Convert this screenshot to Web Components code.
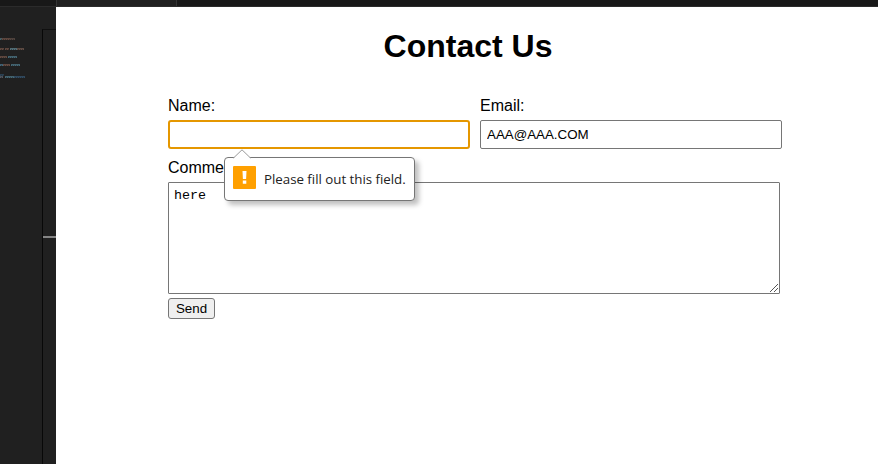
<!DOCTYPE html>
<html lang="en">
<head>
<meta charset="utf-8">
<title>Contact Us</title>
<style>
html, body { margin: 0; height: 100%; overflow: hidden; background: #202020; }
body { font-family: "Liberation Sans", Arial, sans-serif; color: #000; }
</style>
</head>
<body>
<editor-shell>
  <code-minimap slot="side"></code-minimap>
  <contact-form>
    <text-field label="Name:" focused>
      <validation-bubble>Please fill out this field.</validation-bubble>
    </text-field>
    <text-field label="Email:" value="AAA@AAA.COM"></text-field>
    <comment-box slot="comment" label="Comment:">here</comment-box>
    <send-button slot="action">Send</send-button>
  </contact-form>
</editor-shell>
<script>
function define(name, render) {
  customElements.define(name, class extends HTMLElement {
    connectedCallback() {
      if (this.shadowRoot) return;
      this.attachShadow({ mode: 'open' }).innerHTML = '<style>:host,*{box-sizing:border-box}</style>' + render(this);
    }
  });
}

define('editor-shell', () => `
<style>
:host { display: grid; height: 464px; grid-template: 7px 1fr / 56px 1fr; background: #202020; }
.tabs { grid-column: 1 / 3; display: grid; grid-template-columns: 57px 120px 1fr; background: #181818; border-bottom: 1px solid #2b2b2b; }
.tabs i { border-right: 1px solid #343434; }
.tabs i:nth-child(2) { background: #202020; }
.tabs i:last-child { border: 0; }
main { background: #fff; min-width: 0; }
</style>
<div class="tabs"><i></i><i></i><i></i></div>
<slot name="side"></slot>
<main><slot></slot></main>`);

define('code-minimap', () => {
  const lines = [
    [37, [[0, 2, '#58757d'], [2, 8, '#76564a'], [10, 5, '#625048']]],
    [47, [[0, 4, '#76564a'], [5, 4, '#76564a'], [10, 7, '#648a96'], [17, 7, '#765b50']]],
    [55, [[0, 7, '#76564a'], [8, 9, '#507d8f']]],
    [63, [[0, 3, '#4b7a94'], [3, 7, '#7a594c'], [11, 9, '#507d8f']]],
    [73, [[0, 4, '#2f4e66']]],
    [75, [[0, 3, '#5f6570'], [5, 9, '#507d8f'], [14, 11, '#365976']]]
  ];
  const marks = lines.map(([y, runs]) => runs.map(([x, w, c]) =>
    `<path d="M${x} ${y - 6.5}h${w}" stroke="${c}" opacity=".7"/><path d="M${x} ${y - 5.5}h${w}" stroke="${c}" stroke-dasharray="1.5 .5" opacity=".8"/>`).join('')).join('');
  return `
<style>
:host { display: grid; grid-template-columns: 42px 14px; }
svg { display: block; margin-top: 1px; }
.ruler { margin-top: 22px; border-left: 1px solid #080808; border-top: 1px solid #101010; padding-top: 206px; }
.cursor { display: block; height: 2px; background: #858585; }
</style>
<svg width="42" height="90" fill="none">${marks}</svg>
<div class="ruler"><i class="cursor"></i></div>`;
});

define('contact-form', () => `
<style>
:host { display: block; padding: 21px 96px 0 112px; }
h1 { font-size: 32px; line-height: 37px; margin: 0 0 32px; width: 600px; text-align: center; }
.row { display: grid; grid-template-columns: 302px 302px; gap: 10px; }
</style>
<h1>Contact Us</h1>
<div class="row"><slot></slot></div>
<slot name="comment"></slot>
<slot name="action"></slot>`);

define('text-field', el => `
<style>
:host { display: block; position: relative; font-size: 16px; }
label { display: block; line-height: 18px; margin-bottom: 5px; }
input { display: block; width: 302px; height: 29px; margin: 0; padding: 1px 6px; border: 1px solid #767676; border-radius: 2px; outline: 0; background: #fff; color: #000; font: 13.333px "Liberation Sans", Arial, sans-serif; }
:host([focused]) input { border: 2px solid #e59700; border-radius: 3px; }
</style>
<label>${el.getAttribute('label')}</label>
<input value="${el.getAttribute('value') || ''}">
<slot></slot>`);

define('validation-bubble', () => `
<style>
:host { position: absolute; left: 56px; top: 60px; z-index: 2; display: flex; align-items: center; width: 191px; height: 44px; padding: 0 8px; border: 1px solid #767676; border-radius: 4px; background: #fff; box-shadow: 4px 4px 5px rgba(0,0,0,.25); font: 13.333px/20px "Open Sans", "Noto Sans", sans-serif; color: #222; white-space: nowrap; }
.tip { position: absolute; left: 7px; top: -9px; }
.icon { flex: none; margin: -4px 8px 0 0; }
span { letter-spacing: -.03px; }
</style>
<svg class="tip" width="20" height="10"><path d="M1 10V9.5L10 1 19 9.5V10Z" fill="#fff"/><path d="M1.5 9 10 .8 18.5 9" fill="none" stroke="#999"/></svg>
<svg class="icon" width="23" height="23"><rect width="23" height="23" rx="1" fill="#ffa000"/><path d="M9.5 5h4l-.4 8h-3.2zM9.8 14.5h3.5v3.2H9.8z" fill="#fff"/></svg>
<span><slot></slot></span>`);

define('comment-box', el => `
<style>
:host { display: block; margin-top: 10px; font-size: 16px; }
label { display: block; line-height: 18px; margin-bottom: 5px; }
textarea { display: block; width: 612px; height: 112px; margin: 0; padding: 5px; border: 1px solid #767676; border-radius: 1px; resize: none; outline: 0; background: #fff; color: #000; font: 13.333px/15px "Liberation Mono", "Courier New", monospace; }
.frame { position: relative; width: 612px; }
.grip { position: absolute; right: 1px; bottom: 1px; }
</style>
<label>${el.getAttribute('label')}</label>
<div class="frame"><textarea>${el.textContent}</textarea>
<svg class="grip" width="10" height="10" fill="#555" shape-rendering="crispEdges"><path d="M1 8h1v1H1zM2 7h1v1H2zM3 6h1v1H3zM4 5h1v1H4zM5 4h1v1H5zM6 3h1v1H6zM7 2h1v1H7zM8 1h1v1H8zM5 8h1v1H5zM6 7h1v1H6zM7 6h1v1H7zM8 5h1v1H8z"/></svg></div>`);

define('send-button', () => `
<style>
:host { display: block; margin-top: 4px; }
button { display: block; width: 47px; height: 21px; margin: 0; padding: 0; border: 1px solid #767676; border-radius: 3px; background: #efefef; color: #000; font: 13.333px "Liberation Sans", Arial, sans-serif; }
</style>
<button><slot></slot></button>`);
</script>
</body>
</html>
